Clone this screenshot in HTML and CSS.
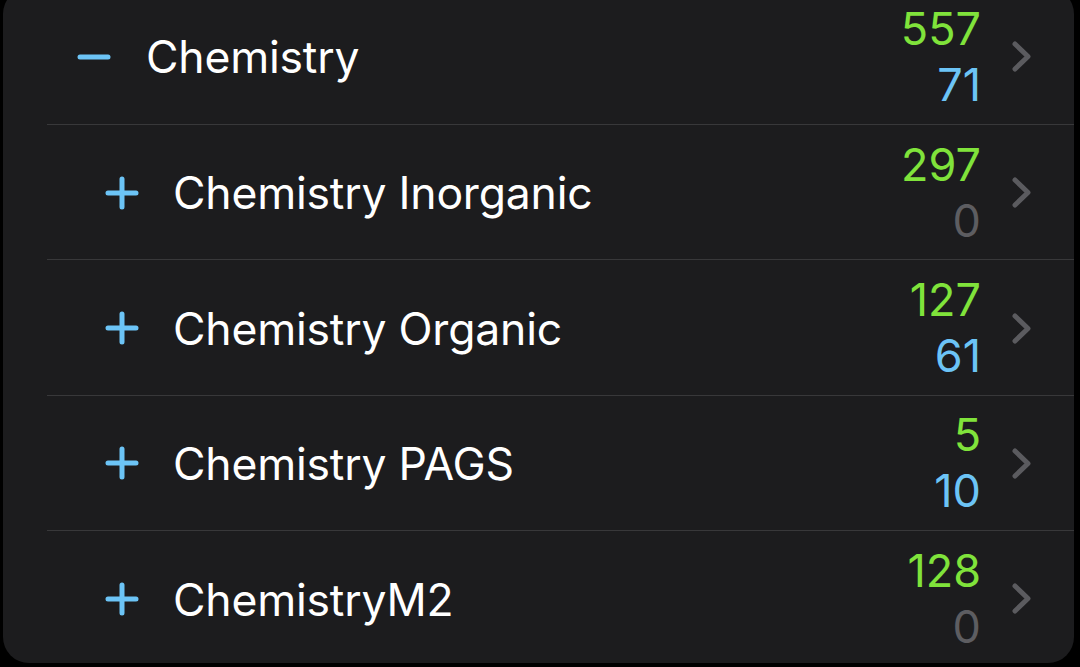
FILE: index.html
```html
<!DOCTYPE html>
<html>
<head>
<meta charset="utf-8">
<link rel="stylesheet" href="styles.css">
</head>
<body>
<div class="card">
  <div class="row">
    <div class="toggle top">
      <svg width="34" height="34" viewBox="0 0 34 34"><path d="M3 17 H31" stroke="currentColor" stroke-width="5" stroke-linecap="round"/></svg>
    </div>
    <div class="name">Chemistry</div>
    <div class="counts"><span class="green">557</span><span class="blue">71</span></div>
    <svg class="chev" width="20" height="31" viewBox="0 0 20 31"><path d="M3 3 L16 15.5 L3 28" fill="none" stroke="currentColor" stroke-width="5" stroke-linecap="round" stroke-linejoin="round"/></svg>
  </div>
  <div class="row">
    <div class="toggle sub">
      <svg width="34" height="34" viewBox="0 0 34 34"><path d="M3 17 H31 M17 3 V31" stroke="currentColor" stroke-width="5" stroke-linecap="round"/></svg>
    </div>
    <div class="name">Chemistry Inorganic</div>
    <div class="counts"><span class="green">297</span><span class="grey">0</span></div>
    <svg class="chev" width="20" height="31" viewBox="0 0 20 31"><path d="M3 3 L16 15.5 L3 28" fill="none" stroke="currentColor" stroke-width="5" stroke-linecap="round" stroke-linejoin="round"/></svg>
  </div>
  <div class="row">
    <div class="toggle sub">
      <svg width="34" height="34" viewBox="0 0 34 34"><path d="M3 17 H31 M17 3 V31" stroke="currentColor" stroke-width="5" stroke-linecap="round"/></svg>
    </div>
    <div class="name">Chemistry Organic</div>
    <div class="counts"><span class="green">127</span><span class="blue">61</span></div>
    <svg class="chev" width="20" height="31" viewBox="0 0 20 31"><path d="M3 3 L16 15.5 L3 28" fill="none" stroke="currentColor" stroke-width="5" stroke-linecap="round" stroke-linejoin="round"/></svg>
  </div>
  <div class="row">
    <div class="toggle sub">
      <svg width="34" height="34" viewBox="0 0 34 34"><path d="M3 17 H31 M17 3 V31" stroke="currentColor" stroke-width="5" stroke-linecap="round"/></svg>
    </div>
    <div class="name">Chemistry PAGS</div>
    <div class="counts"><span class="green">5</span><span class="blue">10</span></div>
    <svg class="chev" width="20" height="31" viewBox="0 0 20 31"><path d="M3 3 L16 15.5 L3 28" fill="none" stroke="currentColor" stroke-width="5" stroke-linecap="round" stroke-linejoin="round"/></svg>
  </div>
  <div class="row last">
    <div class="toggle sub">
      <svg width="34" height="34" viewBox="0 0 34 34"><path d="M3 17 H31 M17 3 V31" stroke="currentColor" stroke-width="5" stroke-linecap="round"/></svg>
    </div>
    <div class="name">ChemistryM2</div>
    <div class="counts"><span class="green">128</span><span class="grey">0</span></div>
    <svg class="chev" width="20" height="31" viewBox="0 0 20 31"><path d="M3 3 L16 15.5 L3 28" fill="none" stroke="currentColor" stroke-width="5" stroke-linecap="round" stroke-linejoin="round"/></svg>
  </div>
</div>
</body>
</html>
```

FILE: styles.css
```css
html, body {
  margin: 0;
  padding: 0;
  background: #000;
  height: 100%;
  overflow: hidden;
}
body {
  font-family: Inter, "Noto Sans", sans-serif;
  color: #fff;
}
.card {
  margin: -12px 6px 0 3px;
  background: #1c1c1e;
  border-radius: 26px;
  height: 675px;
  overflow: hidden;
}
.row {
  display: flex;
  align-items: center;
  height: 135.4px;
  position: relative;
}
.row:first-child {
  height: 137px;
}
.row::after {
  content: "";
  position: absolute;
  left: 44px;
  right: 0;
  bottom: 0;
  height: 1px;
  background: #38383a;
}
.row.last::after {
  display: none;
}
.toggle {
  color: #6cc4f6;
  display: flex;
  align-items: center;
}
.toggle.top {
  margin-left: 74px;
  width: 69px;
}
.toggle.sub {
  margin-left: 102px;
  width: 68px;
}
.name {
  flex: 1;
  font-size: 44.5px;
  letter-spacing: -0.2px;
  line-height: 1;
  padding-top: 2px;
}
.counts {
  display: flex;
  flex-direction: column;
  align-items: flex-end;
  font-size: 45px;
  line-height: 56px;
  margin-right: 31px;
}
.green { color: #80e33b; }
.blue { color: #6cc4f6; }
.grey { color: #5d5d61; }
.chev {
  color: #5b5b5f;
  margin-right: 42px;
}
```
